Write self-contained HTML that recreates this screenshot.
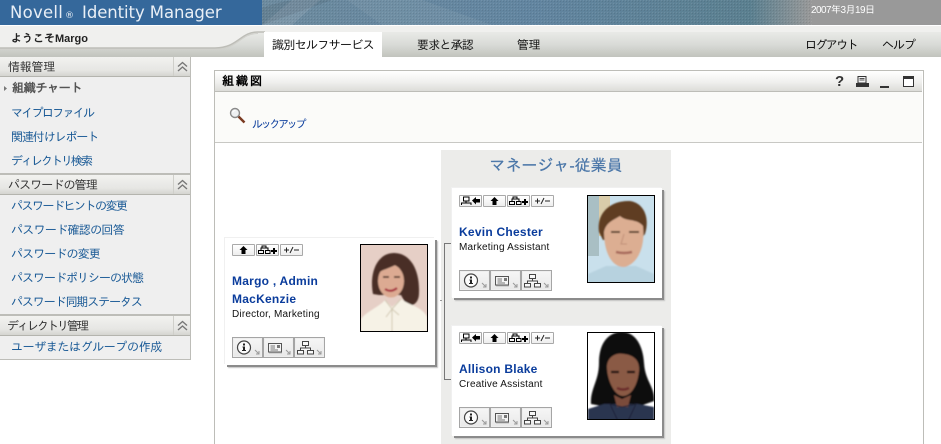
<!DOCTYPE html>
<html lang="ja"><head><meta charset="utf-8"><title>Identity Manager</title>
<style>
html,body{margin:0;padding:0;background:#fff}
#p{position:relative;width:941px;height:444px;overflow:hidden;background:#fff;font-family:"Liberation Sans","IPAGothic","Noto Sans CJK JP",sans-serif;font-size:12px}
#p div,#p svg{position:absolute}
.t{white-space:nowrap;line-height:14px}
.lk{color:#1a5a96;font-size:12px;left:11px}
.sh{left:0;width:190px;height:19px;background:linear-gradient(#f2f2f0,#e6e6e3 70%,#d4d4d0);border-bottom:1px solid #b4b4ae;border-top:2px solid #bdbdb8}
.shb{left:173px;top:0;width:17px;height:19px;border-left:1px solid #cfcfca}
.st{left:8px;top:3px;color:#333;font-size:12px;white-space:nowrap;line-height:14px}
.card{width:210px;background:#fff;box-shadow:-1px -1px 0 #f0f0f0,2px 2px 0 #8b8b8b,3px 3px 1px #c4c4c4}
.nm{color:#0a3c9c;font:bold 12px/17px "Liberation Sans",sans-serif;letter-spacing:.25px;white-space:nowrap}
.ti{color:#111;font:10px/12px "Liberation Sans",sans-serif;letter-spacing:.2px;white-space:nowrap}
.b{width:21px;height:10px;border:1px solid #a9a9a9;background:linear-gradient(#fff,#eee);border-radius:1px}
.ab{width:29px;height:19px;border:1px solid #a5a5a5;background:linear-gradient(#f6f6f6,#e8e8e8);box-shadow:inset 0 0 0 1px #eee}
.ph{width:66px;height:86px;border:1px solid #000}
</style></head><body><div id="p">
<svg width="0" height="0" style="left:0;top:0">
<defs>
<pattern id="tx" width="3" height="3" patternUnits="userSpaceOnUse"><rect width="1" height="1" fill="#fff" fill-opacity=".09"/><rect x="1" y="1" width="1" height="1" fill="#000" fill-opacity=".09"/></pattern>
<linearGradient id="hg" x1="0" x2="1"><stop offset="0" stop-color="#6d8b9f"/><stop offset=".4" stop-color="#6285a0"/><stop offset=".72" stop-color="#5b8090"/><stop offset=".81" stop-color="#999"/><stop offset="1" stop-color="#999"/></linearGradient>
<symbol id="up" viewBox="0 0 21 10"><path d="M10.500 1 L14.500 5 L12.500 5 L12.500 9 L8.500 9 L8.500 5 L6.500 5Z" fill="#000"/></symbol>
<symbol id="org" viewBox="0 0 21 10"><path d="M1.500 8.500V5.500H6.500V8.500ZM8.500 8.500V5.500H13V8.500ZM4 5.500V3H11V5.500M5 3V1H9V3" fill="none" stroke="#000"/><path d="M14 5H16V3H18V5H20V7H18V9H16V7H14Z" fill="#000"/></symbol>
<symbol id="pm" viewBox="0 0 21 10"><path d="M3 5H8M5.500 2.500V7.500M9 8L12 2M13 5H18" fill="none" stroke="#222"/></symbol>
<symbol id="bk" viewBox="0 0 21 10"><path d="M3.500 1H9V5H3.500ZM6 5V7M1.500 9V7H11V9" fill="none" stroke="#000"/><path d="M12 4.500L16 1V3H20V6.500H16V8.500Z" fill="#000"/></symbol>
<symbol id="ai" viewBox="0 0 29 19"><circle cx="11" cy="9.500" r="6.500" fill="#fbfbfb" stroke="#444" stroke-width="1.200"/><path d="M10 5.500h2v2h-2zM9.500 8.500h2.500v3.500h1v1h-4v-1h1v-2.500h-.5z" fill="#222"/><path d="M22 12L26 16M26 13V16H23" fill="none" stroke="#999"/></symbol>
<symbol id="ac" viewBox="0 0 29 19"><rect x="4.500" y="5.500" width="13" height="8.500" fill="#f4f4f4" stroke="#555"/><path d="M6.500 8H11M6.500 10H11M6.500 12H14" stroke="#777"/><rect x="13" y="7" width="3" height="3" fill="#777"/><path d="M5 15H18" stroke="#bbb"/><path d="M22 12L26 16M26 13V16H23" fill="none" stroke="#999"/></symbol>
<symbol id="ao" viewBox="0 0 29 19"><path d="M7.500 3.500H13.500V7.500H7.500ZM2.500 12.500H8.500V16H2.500ZM12.500 12.500H18.500V16H12.500ZM10.500 7.500V10M5.500 12.500V10H15.500V12.500" fill="#f8f8f8" stroke="#444"/><path d="M22 12L26 16M26 13V16H23" fill="none" stroke="#999"/></symbol>
<symbol id="chev" viewBox="0 0 17 19"><path d="M4 9.500L8.500 5.500L13 9.500M4 14L8.500 10L13 14" fill="none" stroke="#777" stroke-width="1.400"/></symbol>
<filter id="bl"><feGaussianBlur stdDeviation=".9"/></filter>
</defs></svg>

<!-- header -->
<div style="left:0;top:0;width:262px;height:25px;background:#35689b"></div>
<svg style="left:262px;top:0" width="679" height="25">
<rect width="679" height="25" fill="url(#hg)"/>
<path d="M0 25L30 0H58L30 25Z" fill="#fff" fill-opacity=".1"/>
<path d="M85 0H160L230 25H120Z" fill="#fff" fill-opacity=".06"/>
<path d="M0 8Q30 -4 70 0L0 25Z" fill="#000" fill-opacity=".07"/>
<rect width="550" height="25" fill="url(#tx)"/>
</svg>
<div class="t" style="left:10px;top:3px;color:#e9eff6;font:16.5px/20px 'DejaVu Sans','Liberation Sans',sans-serif;letter-spacing:.25px">Novell<span style="font-size:9px;letter-spacing:0;margin:0 8px 0 2px">®</span><span style="letter-spacing:-.08px">Identity Manager</span></div>
<div class="t" style="left:811px;top:4px;color:#fff;font-size:10px;letter-spacing:-.55px">2007年3月19日</div>

<!-- nav band -->
<div style="left:0;top:25px;width:941px;height:1px;background:#fff"></div>
<div style="left:0;top:26px;width:941px;height:6px;background:#f0f0ee"></div>
<div style="left:0;top:32px;width:941px;height:25px;background:linear-gradient(#e9eae7,#d9dbd7 50%,#c1c3bd)"></div>
<svg style="left:0;top:26px" width="265" height="31">
<path d="M0 0H265V6H258C240 6 238 22 215 22H0Z" fill="#f0f0ee"/>
<path d="M0 22H215C238 22 240 6 258 6H265" fill="none" stroke="#bdbdb7" stroke-width="1.500"/>
<path d="M0 23.500H215C238 23.500 240 7.500 258 7.500" fill="none" stroke="#d0d0cb"/>
</svg>
<div class="t" style="left:11px;top:32px;color:#222;font-size:11px;font-weight:bold">ようこそMargo</div>
<div style="left:264px;top:32px;width:118px;height:25px;background:#fff"></div>
<div class="t" style="left:272px;top:38px;color:#111;letter-spacing:-.67px">識別セルフサービス</div>
<div class="t" style="left:417px;top:38px;color:#111;letter-spacing:-.8px">要求と承認</div>
<div class="t" style="left:517px;top:38px;color:#111;letter-spacing:-.5px">管理</div>
<div class="t" style="left:805px;top:38px;color:#111;letter-spacing:-1.6px">ログアウト</div>
<div class="t" style="left:882px;top:38px;color:#111;letter-spacing:-1px">ヘルプ</div>

<!-- sidebar -->
<div style="left:0;top:57px;width:190px;height:302px;background:#efefef;border-right:1px solid #bdbdb8;border-bottom:1px solid #bdbdb8"></div>
<div class="sh" style="top:57px;border-top:0"><div class="st" style="top:3px;letter-spacing:-.25px">情報管理</div><svg class="shb" width="17" height="19"><use href="#chev"/></svg></div>
<svg style="left:4px;top:86px" width="4" height="5"><path d="M0 0L3 2.500L0 5Z" fill="#777"/></svg>
<div class="t" style="left:12px;top:81px;color:#555;font-weight:bold;letter-spacing:-.3px">組織チャート</div>
<div class="t lk" style="top:106px;letter-spacing:-1.7px">マイプロファイル</div>
<div class="t lk" style="top:130px;letter-spacing:-1.1px">関連付けレポート</div>
<div class="t lk" style="top:154px;letter-spacing:-2px">ディレクトリ検索</div>
<div class="sh" style="top:173px"><div class="st" style="letter-spacing:-.9px">パスワードの管理</div><svg class="shb" width="17" height="19"><use href="#chev"/></svg></div>
<div class="t lk" style="top:199px;letter-spacing:-1.5px">パスワードヒントの変更</div>
<div class="t lk" style="top:223px;letter-spacing:-.7px">パスワード確認の回答</div>
<div class="t lk" style="top:247px;letter-spacing:-.9px">パスワードの変更</div>
<div class="t lk" style="top:271px;letter-spacing:-1px">パスワードポリシーの状態</div>
<div class="t lk" style="top:295px;letter-spacing:-1.1px">パスワード同期ステータス</div>
<div class="sh" style="top:314px"><div class="st" style="left:7px;letter-spacing:-2px">ディレクトリ管理</div><svg class="shb" width="17" height="19"><use href="#chev"/></svg></div>
<div class="t lk" style="top:340px;letter-spacing:-.4px">ユーザまたはグループの作成</div>

<!-- portlet -->
<div style="left:214px;top:70px;width:708px;height:380px;border:1px solid #bdbdb8;background:#fff"></div>
<div style="left:215px;top:71px;width:707px;height:20px;background:linear-gradient(#fff,#f0f0ee 55%,#dcdcd8);border-bottom:1px solid #bdbdb8"></div>
<div class="t" style="left:222px;top:74px;color:#000;font-weight:bold;letter-spacing:2px">組織図</div>
<div class="t" style="left:835px;top:74px;font:bold 15px/16px 'Liberation Sans',sans-serif;color:#333">?</div>
<svg style="left:855px;top:75px" width="60" height="14">
<path d="M3 1.500H11V8H3Z" fill="#f4f4f4" stroke="#333"/><path d="M4.500 3.500H9.500M4.500 5H9.500" stroke="#555"/><path d="M1 8H14V12H1Z" fill="#333"/>
<rect x="25" y="11" width="9" height="2" fill="#333"/>
<rect x="48.500" y="1.500" width="10" height="10" fill="#fff" stroke="#333"/><rect x="48" y="1" width="11" height="3" fill="#333"/>
</svg>
<div style="left:215px;top:92px;width:707px;height:50px;background:#fbfbf9;border-bottom:1px solid #c8c8c4"></div>
<svg style="left:229px;top:107px" width="18" height="17">
<path d="M9 9L15.500 15.500" stroke="#7a3a22" stroke-width="2.500"/>
<circle cx="6" cy="6" r="4.500" fill="#eef0f2" stroke="#8a8a8a" stroke-width="1.400"/>
<path d="M3.500 5.500Q4.500 3.500 6.500 3.500" stroke="#fff" fill="none"/>
</svg>
<div class="t" style="left:252px;top:118px;color:#0a3c9c;font-size:11px;letter-spacing:-2.300px">ルックアップ</div>

<!-- manager panel -->
<div style="left:441px;top:150px;width:230px;height:294px;background:#ececea"></div>
<div class="t" style="left:376px;top:158px;width:360px;text-align:center;color:#4a76a8;font-size:16px;line-height:18px;-webkit-text-stroke:.2px #4a76a8">マネージャ-従業員</div>
<div style="left:444px;top:243px;width:8px;height:137px;box-sizing:border-box;border:1px solid #777;border-right:0"></div>
<div style="left:440px;top:300px;width:2px;height:1px;background:#999"></div>

<!-- Margo -->
<div class="card" style="left:225px;top:238px;height:127px"></div>
<div class="b" style="left:232px;top:244px"><svg width="21" height="10"><use href="#up"/></svg></div>
<div class="b" style="left:256px;top:244px"><svg width="21" height="10"><use href="#org"/></svg></div>
<div class="b" style="left:280px;top:244px"><svg width="21" height="10"><use href="#pm"/></svg></div>
<div class="nm" style="left:232px;top:273px">Margo , Admin</div>
<div class="nm" style="left:232px;top:291px">MacKenzie</div>
<div class="ti" style="left:232px;top:309px">Director, Marketing</div>
<div class="ab" style="left:232px;top:337px"><svg width="29" height="19"><use href="#ai"/></svg></div>
<div class="ab" style="left:263px;top:337px"><svg width="29" height="19"><use href="#ac"/></svg></div>
<div class="ab" style="left:294px;top:337px"><svg width="29" height="19"><use href="#ao"/></svg></div>
<div class="ph" style="left:360px;top:244px"><svg width="66" height="86"><rect width="66" height="86" fill="#e6cfc6"/><g filter="url(#bl)">
<path d="M12 49C8 28 16 8 33 8C50 8 59 26 58 48C58 56 54 61 46 61L40 50H18Z" fill="#4a2f25"/>
<ellipse cx="30" cy="36" rx="13" ry="16.500" fill="#dcaa92"/>
<path d="M17 28C22 24 34 22 38 17L44 32L46 18L30 13L18 20Z" fill="#4a2f25"/>
<path d="M22 32h6M33 32h6" stroke="#3a2018" stroke-width="1.500"/>
<path d="M24 44Q30 48 36 43" stroke="#a83040" stroke-width="2.200" fill="none"/>
<path d="M0 88V74C6 66 18 62 24 55L31 62L40 54C48 60 62 62 66 72V88Z" fill="#f6f2e6"/>
<path d="M24 55L31 64L25 72M40 54L31 64L38 70M31 64V88" stroke="#d0c7b0" fill="none"/>
</g></svg></div>

<!-- Kevin -->
<div class="card" style="left:452px;top:188px;height:110px"></div>
<div class="b" style="left:459px;top:195px"><svg width="21" height="10"><use href="#bk"/></svg></div>
<div class="b" style="left:483px;top:195px"><svg width="21" height="10"><use href="#up"/></svg></div>
<div class="b" style="left:507px;top:195px"><svg width="21" height="10"><use href="#org"/></svg></div>
<div class="b" style="left:531px;top:195px"><svg width="21" height="10"><use href="#pm"/></svg></div>
<div class="nm" style="left:459px;top:224px">Kevin Chester</div>
<div class="ti" style="left:459px;top:242px">Marketing Assistant</div>
<div class="ab" style="left:459px;top:270px"><svg width="29" height="19"><use href="#ai"/></svg></div>
<div class="ab" style="left:490px;top:270px"><svg width="29" height="19"><use href="#ac"/></svg></div>
<div class="ab" style="left:521px;top:270px"><svg width="29" height="19"><use href="#ao"/></svg></div>
<div class="ph" style="left:587px;top:195px"><svg width="66" height="86"><rect width="66" height="86" fill="#c9e0ec"/><rect x="11" width="11" height="40" fill="#d9ccaa"/><rect width="11" height="60" fill="#a9bfc4"/><g filter="url(#bl)">
<path d="M0 88V78L18 70H48L66 78V88Z" fill="#b7d2df"/>
<path d="M11 36C8 16 24 4 42 5C56 7 62 22 57 38L52 44L15 44Z" fill="#5e3c22"/>
<path d="M16 36C18 26 26 24 32 20C38 26 48 22 55 30C57 48 52 66 37 71C25 72 16 58 16 36Z" fill="#dcae92"/>
<path d="M23 36h9M41 36h10" stroke="#4a3020" stroke-width="1.800"/>
<path d="M28 56Q36 58 44 56" stroke="#a86a5c" stroke-width="2.500" fill="none"/>
<path d="M36 38L33 48H39" stroke="#c08f78" fill="none"/>
</g></svg></div>

<!-- Allison -->
<div class="card" style="left:452px;top:326px;height:110px"></div>
<div class="b" style="left:459px;top:332px"><svg width="21" height="10"><use href="#bk"/></svg></div>
<div class="b" style="left:483px;top:332px"><svg width="21" height="10"><use href="#up"/></svg></div>
<div class="b" style="left:507px;top:332px"><svg width="21" height="10"><use href="#org"/></svg></div>
<div class="b" style="left:531px;top:332px"><svg width="21" height="10"><use href="#pm"/></svg></div>
<div class="nm" style="left:459px;top:361px">Allison Blake</div>
<div class="ti" style="left:459px;top:379px">Creative Assistant</div>
<div class="ab" style="left:459px;top:407px"><svg width="29" height="19"><use href="#ai"/></svg></div>
<div class="ab" style="left:490px;top:407px"><svg width="29" height="19"><use href="#ac"/></svg></div>
<div class="ab" style="left:521px;top:407px"><svg width="29" height="19"><use href="#ao"/></svg></div>
<div class="ph" style="left:587px;top:332px"><svg width="66" height="86"><rect width="66" height="86" fill="#fff"/><g filter="url(#bl)">
<path d="M11 30C11 8 22 -1 34 -1C47 -1 55 12 56 30C57 48 67 54 66 68L52 73H14L3 71C2 56 11 48 11 30Z" fill="#0b0a0c"/>
<path d="M0 88V76L16 71H50L66 74V88Z" fill="#2c3550"/>
<path d="M19 34C19 24 28 19 36 21C46 22 52 28 51 38C50 50 44 63 35 63C26 63 19 46 19 34Z" fill="#8a5a45"/>
<path d="M23 39h8M39 39h8" stroke="#1a0f0a" stroke-width="2.200"/>
<path d="M29 55Q35 58 41 55" stroke="#6a2c2c" stroke-width="2.500" fill="none"/>
<path d="M26 62L34 66L43 62L40 74H29Z" fill="#7a4c3a"/>
<path d="M34 74L22 71L30 88M34 74L48 71L40 88" stroke="#1a2036" fill="none"/>
</g></svg></div>
</div></body></html>
